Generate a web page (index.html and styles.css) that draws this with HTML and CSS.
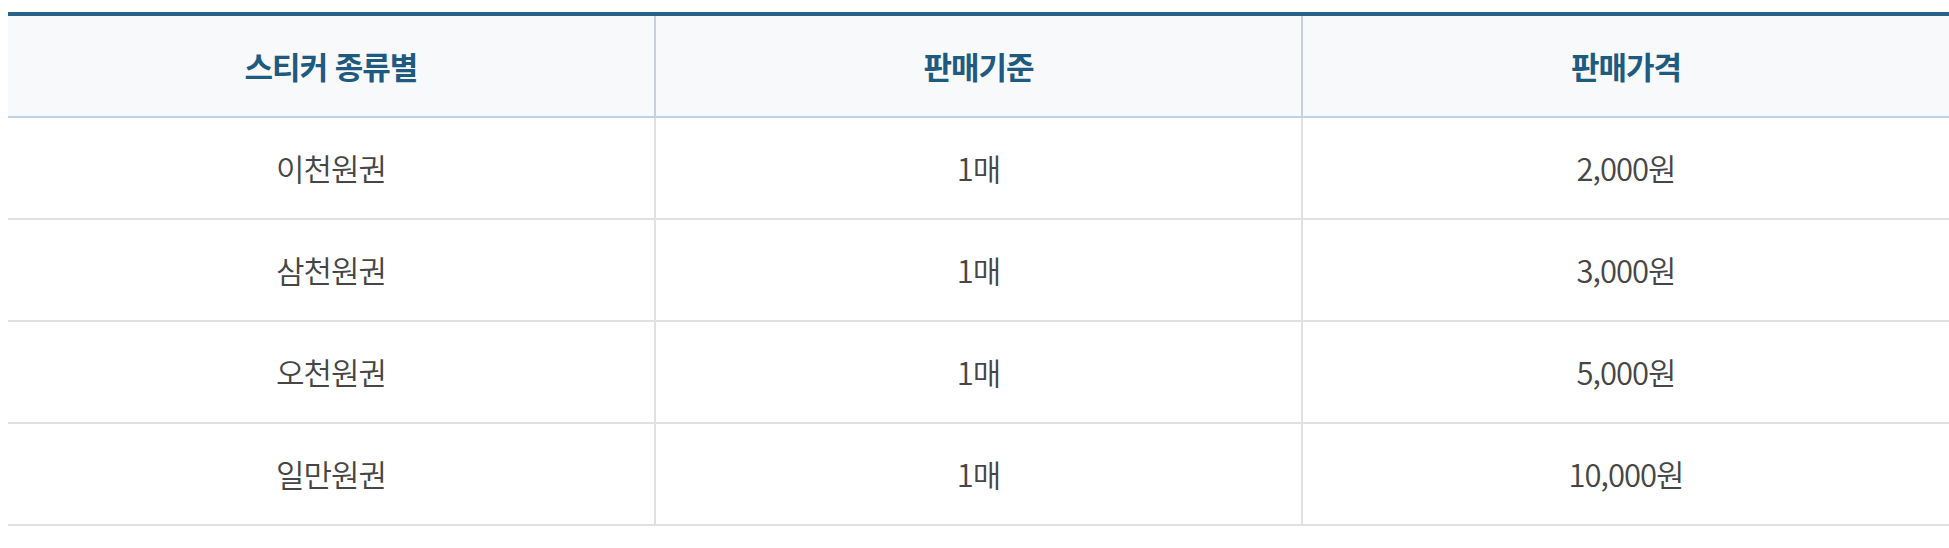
FILE: index.html
```html
<!DOCTYPE html>
<html lang="ko">
<head>
<meta charset="utf-8">
<title>스티커 판매가격</title>
<link rel="stylesheet" href="styles.css">
</head>
<body>
<table class="price-table">
  <thead>
    <tr>
      <th>스티커 종류별</th>
      <th>판매기준</th>
      <th>판매가격</th>
    </tr>
  </thead>
  <tbody>
    <tr><td>이천원권</td><td>1매</td><td>2,000원</td></tr>
    <tr><td>삼천원권</td><td>1매</td><td>3,000원</td></tr>
    <tr><td>오천원권</td><td>1매</td><td>5,000원</td></tr>
    <tr><td>일만원권</td><td>1매</td><td>10,000원</td></tr>
  </tbody>
</table>
</body>
</html>
```
FILE: styles.css
```css
html, body {
  margin: 0;
  padding: 0;
  background: #ffffff;
}
body {
  padding: 12px 0 0 8px;
  overflow: hidden;
  font-family: "Noto Sans CJK KR", "Noto Sans", sans-serif;
}
.price-table {
  width: 1941px;
  border-collapse: collapse;
  table-layout: fixed;
  border-top: 4px solid #2b6189;
}
.price-table th,
.price-table td {
  text-align: center;
  vertical-align: middle;
  padding: 0;
  line-height: 1.2;
}
.price-table th {
  height: 100px;
  background: #f7f9fb;
  color: #1f5a80;
  font-size: 31px;
  font-weight: 700;
  letter-spacing: -1px;
  border-bottom: 2px solid #bcd3e8;
  border-left: 2px solid #c9cfd8;
}
.price-table td {
  height: 100px;
  color: #464646;
  font-size: 31px;
  font-weight: 350;
  letter-spacing: -1px;
  border-bottom: 2px solid #e1e1e1;
  border-left: 2px solid #e1e1e1;
}
.price-table th:first-child,
.price-table td:first-child {
  border-left: none;
}
```
